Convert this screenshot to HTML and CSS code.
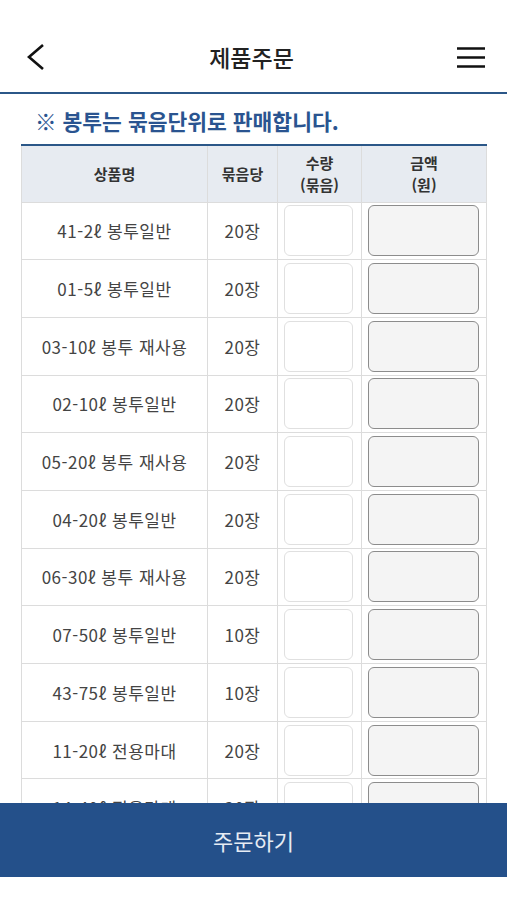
FILE: index.html
```html
<!DOCTYPE html>
<html lang="ko">
<head>
<meta charset="utf-8">
<title>제품주문</title>
<link rel="stylesheet" href="styles.css">
</head>
<body>
<header class="topbar">
  <button class="icon-btn back" aria-label="뒤로">
    <svg width="20" height="28" viewBox="0 0 20 28"><path d="M17 2 L3 14 L17 26" fill="none" stroke="#111" stroke-width="2.6"/></svg>
  </button>
  <h1 class="title">제품주문</h1>
  <button class="icon-btn menu" aria-label="메뉴">
    <svg width="28" height="22" viewBox="0 0 28 22"><path d="M0 2.5H28M0 11.5H28M0 20.5H28" stroke="#111" stroke-width="2.4"/></svg>
  </button>
</header>
<main class="content">
  <p class="notice">※ 봉투는 묶음단위로 판매합니다.</p>
  <table class="order">
    <colgroup>
      <col class="c-name"><col class="c-unit"><col class="c-qty"><col class="c-amt">
    </colgroup>
    <thead>
      <tr><th>상품명</th><th>묶음당</th><th>수량<br>(묶음)</th><th>금액<br>(원)</th></tr>
    </thead>
    <tbody>
      <tr><td>41-2ℓ 봉투일반</td><td>20장</td><td><input class="qty"></td><td><input class="amt" readonly></td></tr>
      <tr><td>01-5ℓ 봉투일반</td><td>20장</td><td><input class="qty"></td><td><input class="amt" readonly></td></tr>
      <tr><td>03-10ℓ 봉투 재사용</td><td>20장</td><td><input class="qty"></td><td><input class="amt" readonly></td></tr>
      <tr><td>02-10ℓ 봉투일반</td><td>20장</td><td><input class="qty"></td><td><input class="amt" readonly></td></tr>
      <tr><td>05-20ℓ 봉투 재사용</td><td>20장</td><td><input class="qty"></td><td><input class="amt" readonly></td></tr>
      <tr><td>04-20ℓ 봉투일반</td><td>20장</td><td><input class="qty"></td><td><input class="amt" readonly></td></tr>
      <tr><td>06-30ℓ 봉투 재사용</td><td>20장</td><td><input class="qty"></td><td><input class="amt" readonly></td></tr>
      <tr><td>07-50ℓ 봉투일반</td><td>10장</td><td><input class="qty"></td><td><input class="amt" readonly></td></tr>
      <tr><td>43-75ℓ 봉투일반</td><td>10장</td><td><input class="qty"></td><td><input class="amt" readonly></td></tr>
      <tr><td>11-20ℓ 전용마대</td><td>20장</td><td><input class="qty"></td><td><input class="amt" readonly></td></tr>
      <tr><td>14-40ℓ 전용마대</td><td>20장</td><td><input class="qty"></td><td><input class="amt" readonly></td></tr>
      <tr><td>15-50ℓ 전용마대</td><td>10장</td><td><input class="qty"></td><td><input class="amt" readonly></td></tr>
    </tbody>
  </table>
</main>
<div class="order-bar">
  <button class="order-btn">주문하기</button>
</div>
</body>
</html>
```
FILE: styles.css
```css
* { box-sizing: border-box; }
html, body { margin: 0; padding: 0; background: #fff; }
body {
  font-family: "Noto Sans CJK KR", "Noto Sans", sans-serif;
  color: #333;
}
.topbar {
  height: 94px;
  display: flex;
  align-items: center;
  justify-content: space-between;
  padding: 22px 22px 0 26px;
  border-bottom: 2px solid #2b5788;
}
.icon-btn {
  border: 0;
  background: none;
  padding: 0;
  display: flex;
  align-items: center;
}
.title {
  margin: 0;
  font-size: 23px;
  font-weight: 500;
  color: #222;
}
.content {
  padding: 0 21px 140px 21px;
}
.notice {
  margin: 0;
  height: 50px;
  display: flex;
  align-items: center;
  padding: 2px 0 0 14px;
  font-size: 21.5px;
  font-weight: 700;
  color: #2a5490;
}
.order {
  width: 465px;
  border-collapse: collapse;
  table-layout: fixed;
  border-top: 2px solid #2b5788;
}
.c-name { width: 186px; }
.c-unit { width: 70px; }
.c-qty { width: 84px; }
.c-amt { width: 125px; }
.order th, .order td {
  border: 1px solid #dcdcdc;
  text-align: center;
  padding: 0;
}
.order th {
  background: #e7ebf1;
  height: 57px;
  font-size: 15px;
  font-weight: 700;
  line-height: 22px;
  color: #333;
}
.order td {
  height: 57.7px;
  font-size: 17px;
  letter-spacing: 0.5px;
  color: #444;
}
.qty, .amt {
  display: block;
  height: 51px;
  border-radius: 6px;
  font: inherit;
}
.qty {
  width: 69px;
  margin: 0 0 0 6px;
  border: 1.5px solid #e0e0e0;
  background: #fff;
}
.amt {
  width: 111px;
  margin: 0 0 0 6px;
  border: 1.5px solid #8c8c8c;
  background: #f4f4f4;
}
.order-bar {
  position: fixed;
  left: 0;
  right: 0;
  bottom: 0;
  height: 97px;
  background: #fff;
}
.order-btn {
  display: block;
  width: 100%;
  height: 74px;
  border: 0;
  background: #24508a;
  color: #e6ecf4;
  font-family: inherit;
  font-size: 22px;
  font-weight: 400;
}
```
